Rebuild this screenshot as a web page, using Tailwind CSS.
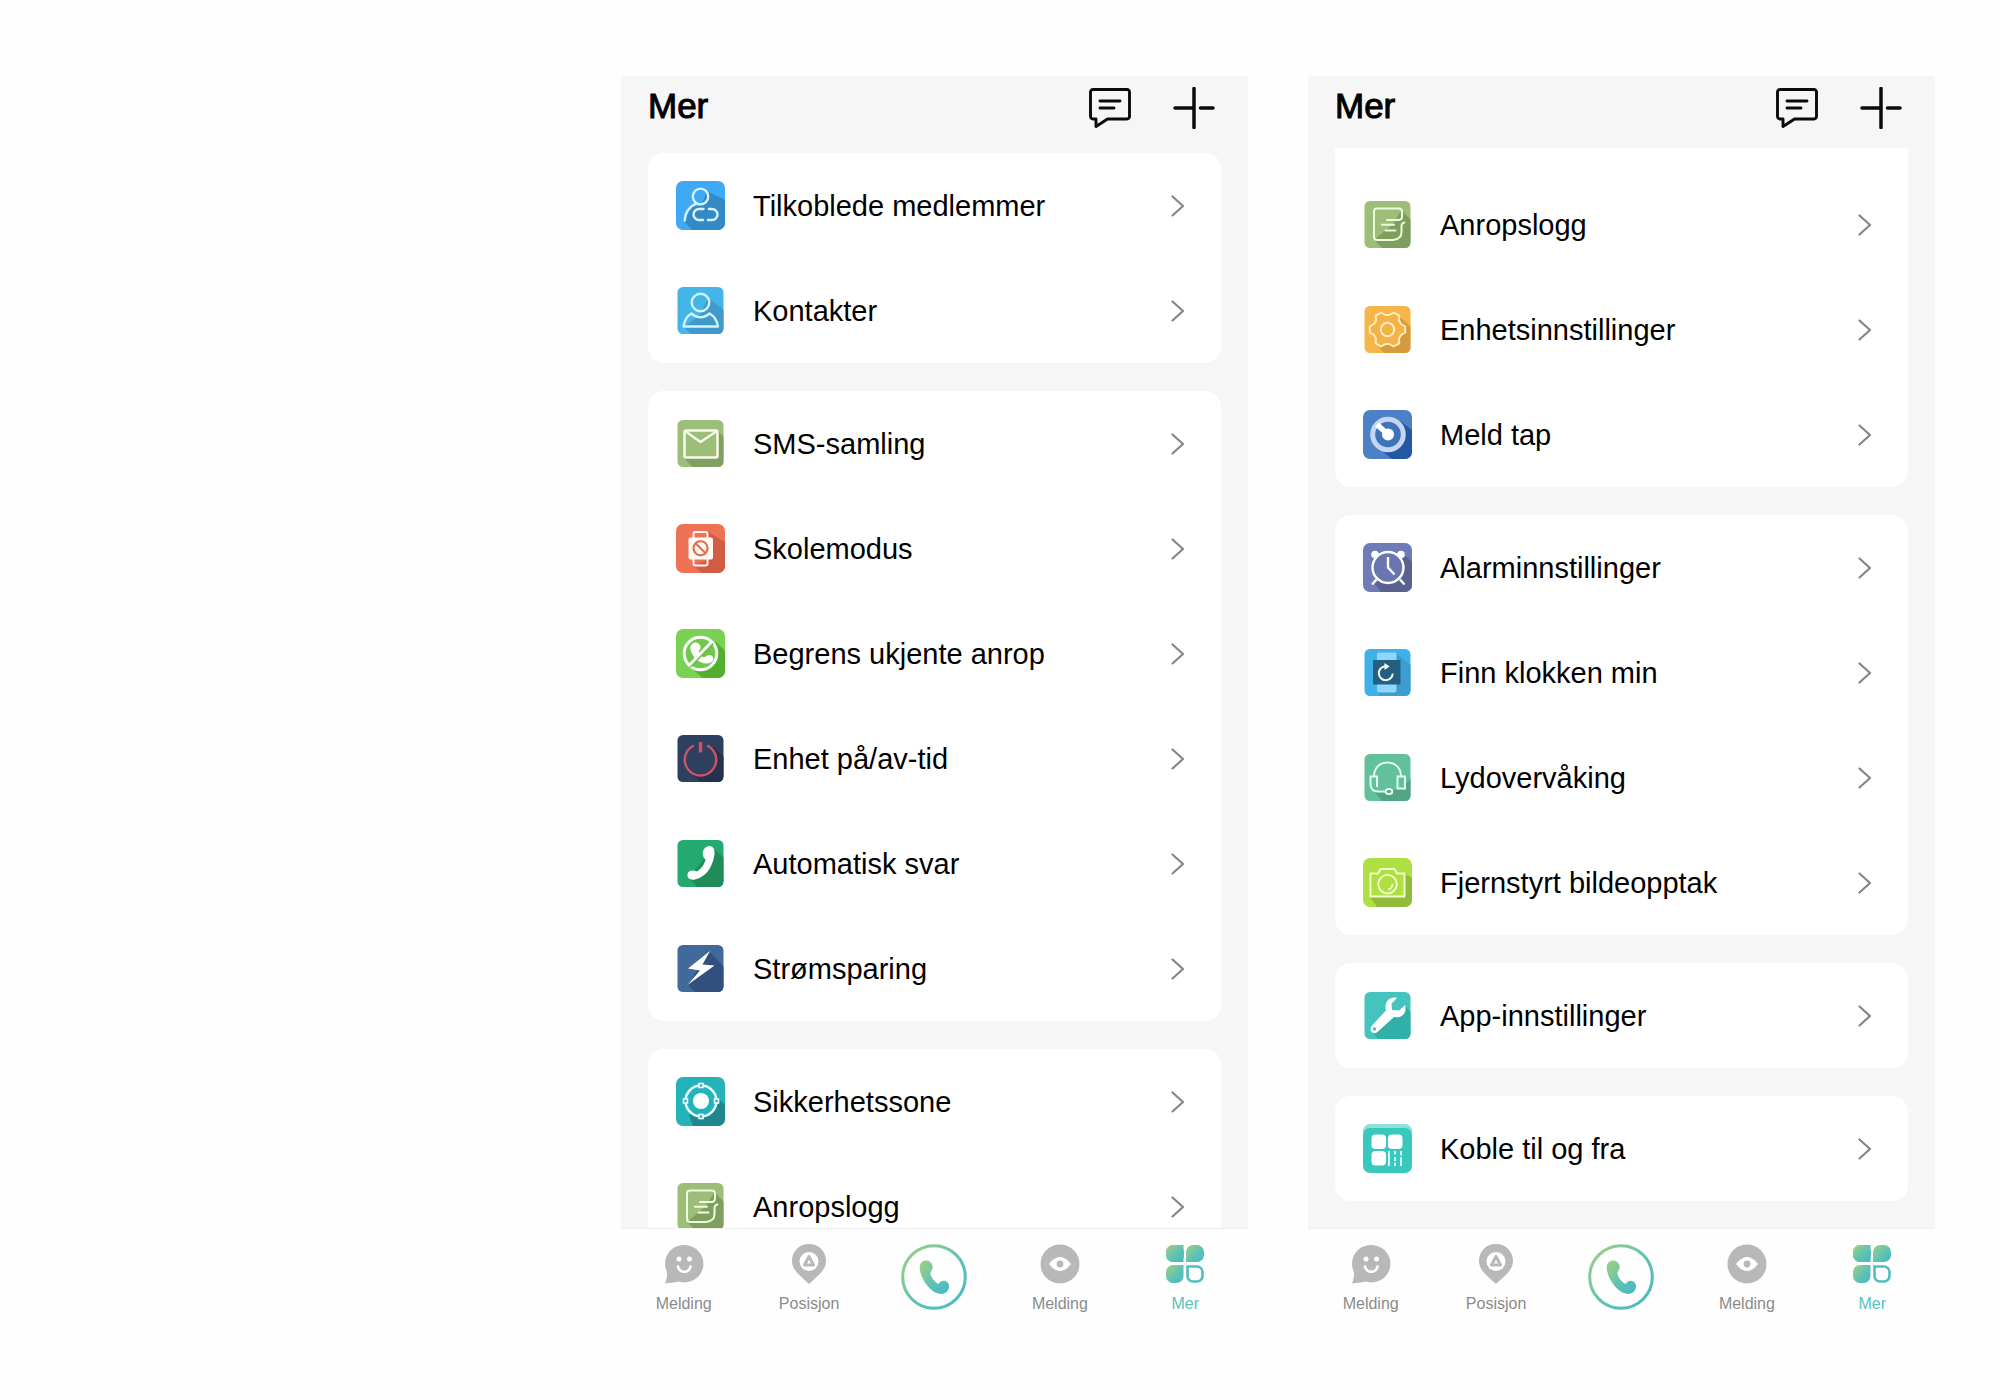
<!DOCTYPE html>
<html lang="no">
<head>
<meta charset="utf-8">
<meta name="viewport" content="width=device-width, initial-scale=1">
<title>Mer</title>
<script src="https://cdn.jsdelivr.net/npm/@tailwindcss/browser@4"></script>
</head>
<body class="bg-[#fefefe] font-['Liberation_Sans',Arial,sans-serif] text-black">

<!-- Shared icon symbols, drawn on a 49-unit tile -->
<svg width="0" height="0" class="absolute" aria-hidden="true">
  <defs>
    <linearGradient id="brand" x1="0" y1="0" x2="1" y2="1"><stop offset="0" stop-color="#a3d07f"/><stop offset=".55" stop-color="#5fc2b4"/><stop offset="1" stop-color="#45b9c6"/></linearGradient>
    <clipPath id="big"><rect width="49" height="49" rx="7"/></clipPath>
    <clipPath id="small"><rect x="1.5" y="1" width="46" height="47" rx="5.5"/></clipPath>
  </defs>
  <symbol id="members" viewBox="0 0 49 49"><g clip-path="url(#big)"><path fill="#3fa9f5" d="M0 0h49v49H0z"/><path fill="#338ac4" d="M31 10l18 9v30H16l-8-9 8-14 9-1z"/></g><g fill="none" stroke="#d5f3ff" stroke-width="2.4" stroke-linecap="round"><ellipse cx="24.5" cy="15.500" rx="7.700" ry="7.900"/><path d="M8.700 39.500C9 31.500 13 26 20 22.500M27.500 28h-4.500a5.500 5.500 0 0 0 0 11h4M33 28h3a5.500 5.500 0 0 1 0 11h-4"/></g></symbol>
  <symbol id="contacts" viewBox="0 0 49 49"><g clip-path="url(#small)"><path fill="#45b5e8" d="M0 0h49v49H0z"/><path fill="#4099c8" d="M32 12l17 13v24H16l-8-8 16-12z"/></g><g fill="none" stroke="#cff3ff" stroke-width="2.400" stroke-linejoin="round"><circle cx="24.500" cy="16.500" r="8.800"/><path d="M7.500 40.500C8.500 34 11 30 15.500 27.500C21 32.500 28 32.500 33.500 27.500C38 30 41 34 42 40.500Z"/></g></symbol>
  <symbol id="sms" viewBox="0 0 49 49"><g clip-path="url(#small)"><path fill="#9dbe78" d="M0 0h49v49H0z"/><path fill="#809f60" d="M41 11l8 8v30H17l-9-10h33z"/></g><g fill="none" stroke="#f6fbe9" stroke-width="2.500" stroke-linejoin="round"><rect x="8.500" y="11.500" width="33" height="27" rx="1.500"/><path d="M9 12l15.500 11L41 12"/></g></symbol>
  <symbol id="school" viewBox="0 0 49 49"><g clip-path="url(#big)"><path fill="#ee7254" d="M0 0h49v49H0z"/><path fill="#cf5e45" d="M32 8l17 10v31H26l-9-7 16-7z"/></g><g fill="none" stroke="#fff4ee" stroke-width="2"><rect x="17.500" y="8" width="14" height="8" rx="2"/><rect x="17.500" y="33" width="14" height="8.500" rx="2"/></g><rect x="12.500" y="13.500" width="24.500" height="22" rx="2" fill="#fff8f4"/><path d="M19.800 19.500l9.500 9.500M24.500 17.200a7 7 0 1 0 .1 0z" fill="none" stroke="#e06d50" stroke-width="2"/></symbol>
  <symbol id="block" viewBox="0 0 49 49"><g clip-path="url(#big)"><path fill="#7bd154" d="M0 0h49v49H0z"/><path fill="#53b02c" d="M40 13l9 9v27H27L14 38z"/></g><circle cx="24.500" cy="24.500" r="16.300" fill="#6fc849" stroke="#fff" stroke-width="3"/><path d="M15.500 15.500c3-3.500 8.500-2 9 2.500 .300 3-2.500 3.500-1.500 6 .700 2 2.500 4 5 4 2.500 0 3-2.500 5.500-2 4.500.500 5 5 2 7-4.500 3-11 1.500-15.500-3s-7.500-11.500-4.500-14.500z" fill="#fff"/><path d="M14 38L37 14.500" stroke="#67c141" stroke-width="2"/><path d="M13 36.500L36 12.500" stroke="#fff" stroke-width="2.800"/></symbol>
  <symbol id="power" viewBox="0 0 49 49"><g clip-path="url(#small)"><path fill="#2e405f" d="M0 0h49v49H0z"/><path fill="#26314d" d="M38 13l11 11v25H25l-12-12z"/></g><circle cx="24.500" cy="25" r="15" fill="#2e405f"/><path d="M17 12a15.700 15.700 0 1 0 15 0" fill="none" stroke="#cc5468" stroke-width="2.400" stroke-linecap="round"/><path d="M24.500 8v10.500" stroke="#cc5468" stroke-width="3.400"/></symbol>
  <symbol id="answer" viewBox="0 0 49 49"><g clip-path="url(#small)"><path fill="#24a971" d="M0 0h49v49H0z"/><path fill="#1f8c5a" d="M37 9l12 11v29H22l-9-10z"/></g><path d="M33 7c4 0 6 3 5.500 8C37 28 30 38 19 40.500c-5 1-8-1.500-7.500-5C12 31 17 31 21 32.500c5-3.500 7.500-7.500 8.500-12C25 17 26 8 33 7z" fill="#fff"/></symbol>
  <symbol id="saver" viewBox="0 0 49 49"><g clip-path="url(#small)"><path fill="#42699c" d="M0 0h49v49H0z"/><path fill="#31507f" d="M34 8l15 16v25H20l-8-8 10-16z"/></g><path d="M34 7L12 24.500l12 2L11.500 41 38.500 21.500l-12-1z" fill="#fff"/></symbol>
  <symbol id="zone" viewBox="0 0 49 49"><g clip-path="url(#big)"><path fill="#25b3ba" d="M0 0h49v49H0z"/><path fill="#20878e" d="M41 20l8 8v21H17l-4-11z"/></g><circle cx="25" cy="24" r="15.500" fill="#25b3ba" stroke="#e9ffff" stroke-width="2.500"/><circle cx="25" cy="24" r="8" fill="#fff"/><g fill="#25b3ba" stroke="#e9ffff" stroke-width="1.600"><rect x="23" y="6.500" width="4" height="4"/><rect x="23" y="37.500" width="4" height="4"/><rect x="7.500" y="22" width="4" height="4"/><rect x="38.500" y="22" width="4" height="4"/></g></symbol>
  <symbol id="log" viewBox="0 0 49 49"><g clip-path="url(#small)"><path fill="#9dbe78" d="M0 0h49v49H0z"/><path fill="#7f9f5f" d="M38.500 10L49 21v28H20l-9-9 19-16z"/></g><path d="M24 20h11q4 0 4-3.500v-5q0-3-3.500-3H14q-3 0-3 3v25.500q0 3 3 3h16q8.500-1 8.500-8v-6q0-3 3-3.500M19 24.800h12M22.500 30.500h10" fill="none" stroke="#eefbdc" stroke-width="2" stroke-linecap="round"/></symbol>
  <symbol id="gear" viewBox="0 0 49 49"><g clip-path="url(#small)"><path fill="#f6b548" d="M0 0h49v49H0z"/><path fill="#d69b3f" d="M36 11l13 12v26H22l-9-11z"/></g><path d="M42.200 21.500v6L38 30l-2 3.500.300 4.800-5.600 3.200-4.200-2.500h-4l-4.200 2.500-5.600-3.200.300-4.800L11 30l-4.200-2.500v-6L11 19l2-3.500-.300-4.800 5.600-3.200 4.200 2.500h4l4.200-2.500 5.600 3.200-.300 4.800 2 3.500z" fill="#f4b347" stroke="#ffeebd" stroke-width="2" stroke-linejoin="round"/><circle cx="24.500" cy="24.500" r="6.700" fill="none" stroke="#ffeebd" stroke-width="2"/></symbol>
  <symbol id="lost" viewBox="0 0 49 49"><g clip-path="url(#big)"><path fill="#4d81c6" d="M0 0h49v49H0z"/><path fill="#2457a3" d="M37 11l12 9v29H29L14 37z"/></g><circle cx="25" cy="24.500" r="15.300" fill="#3f74ba" stroke="#c4d6f4" stroke-width="5"/><circle cx="25" cy="24.500" r="6" fill="#fff"/><path d="M14 14.500L25 24.500" stroke="#fff" stroke-width="5.500"/></symbol>
  <symbol id="alarm" viewBox="0 0 49 49"><g clip-path="url(#big)"><path fill="#6e7bb6" d="M0 0h49v49H0z"/><path fill="#59628f" d="M41 12l8 7v30H18l-6-8z"/></g><circle cx="12" cy="11.500" r="3.800" fill="#fff"/><circle cx="38" cy="11.500" r="3.800" fill="#fff"/><circle cx="25" cy="24.500" r="15.500" fill="#6976b0" stroke="#fff" stroke-width="2.400"/><path d="M25 14v10.500l6.500 7M13.500 36.500l-4.500 5M37 36.500l4.500 5" fill="none" stroke="#fff" stroke-width="2.400"/></symbol>
  <symbol id="find" viewBox="0 0 49 49"><g clip-path="url(#small)"><path fill="#40b1e8" d="M0 0h49v49H0z"/><path fill="#3c9dd0" d="M34 6l15 12v31H18l-4-5z"/></g><path d="M16 4.500h16q1.500 0 1.500 2v6h-19.500v-6q0-2 2-2zM14 36h19.500v6.500q0 2-2 2H16q-2 0-2-2z" fill="#8fd6fb"/><path fill="#235f80" d="M10 12h27.500v24.500H10z"/><path d="M22 18.200a7 7 0 1 0 7.800 7.500" fill="none" stroke="#fff" stroke-width="2"/><path d="M21.500 15l5 3.500-5 3.500z" fill="#fff"/></symbol>
  <symbol id="audio" viewBox="0 0 49 49"><g clip-path="url(#small)"><path fill="#63c09c" d="M0 0h49v49H0z"/><path fill="#54a586" d="M38 36l11-12v25H20l-9-11z"/></g><g fill="none" stroke="#e2fff2" stroke-width="2"><path d="M11 23.500C11 14.500 17 9.500 24.500 9.500S38 14.500 38 23.500M14 34V23.500H7.500V32C8 36 11 38.500 15 38.500h7.500"/><rect x="34.500" y="23.500" width="7.500" height="12"/><ellipse cx="26" cy="38.500" rx="3.300" ry="2.500"/></g></symbol>
  <symbol id="camera" viewBox="0 0 49 49"><g clip-path="url(#big)"><path fill="#aee044" d="M0 0h49v49H0z"/><path fill="#91bb3d" d="M42 16l7 4v29H14L7 39h35z"/></g><g fill="none" stroke="#f1ffc9" stroke-width="1.900" stroke-linejoin="round"><path d="M7.500 15.500h7.500l2.500-4.500h14l2.500 4.500h7.500v23h-34z"/><circle cx="24.500" cy="26.200" r="9.300"/><path d="M29.500 26a6 6 0 0 1-4.500 5.500"/></g></symbol>
  <symbol id="wrench" viewBox="0 0 49 49"><g clip-path="url(#small)"><path fill="#43c5be" d="M0 0h49v49H0z"/><path fill="#2fb0a9" d="M41 14l8 8v27H16l-7-8 24-18z"/></g><path d="M34 7l-5.500 5.500.500 6.500 7 .500L42 14c2.500 7-3 14-11 12L14.500 41c-4.500 3.500-9-1.500-6-6L23 19.500C20.500 11 27 5 34 7z" fill="#fff"/><circle cx="11.500" cy="38" r="1.700" fill="#43c5be"/></symbol>
  <symbol id="link" viewBox="0 0 49 49"><g clip-path="url(#big)"><path fill="#8ee2da" d="M0 0h49v9H0z"/></g><rect y="4" width="49" height="45" rx="7" fill="#39c8bd"/><g fill="#fff"><rect x="8.500" y="10.500" width="14.500" height="14.500" rx="4"/><rect x="25" y="10.500" width="14.500" height="14.500" rx="4"/><rect x="8.500" y="27" width="14.500" height="14.500" rx="4"/></g><path d="M26 27v15M38 27v4.500M38 33v9M32 27v3.500M32 33v4M32 38.500v3.500" stroke="#e9fffc" stroke-width="1.700"/></symbol>

  <symbol id="chevron" viewBox="0 0 14 22"><path d="M1.500 1.500l10.500 9.500L1.500 20.500" fill="none" stroke="#858585" stroke-width="2.200" stroke-linecap="round" stroke-linejoin="round"/></symbol>
  <symbol id="comment" viewBox="0 0 42 40"><path d="M4 1.500h34a2.500 2.500 0 0 1 2.500 2.500v24.500a2.500 2.500 0 0 1-2.500 2.500H18.500L7 38.500V31H4a2.500 2.500 0 0 1-2.500-2.500V4A2.500 2.500 0 0 1 4 1.500zM11 13h20M11 20h14" fill="none" stroke="#0b0b0b" stroke-width="2.900" stroke-linecap="round" stroke-linejoin="round"/></symbol>
  <symbol id="plus" viewBox="0 0 42 42"><path d="M21 1.500v39M2 21h17M27.500 21H40" fill="none" stroke="#0b0b0b" stroke-width="3.500" stroke-linecap="round"/></symbol>

  <symbol id="smile" viewBox="0 0 40 40"><path d="M20.500 1A18.700 18.700 0 1 1 15 37.500C10 38.500 6 39 1 39.500 2.500 36 3.500 32 3 28A18.700 18.700 0 0 1 20.500 1z" fill="#b7b9b8"/><circle cx="15" cy="15" r="2.500" fill="#fff"/><circle cx="25.500" cy="15" r="2.500" fill="#fff"/><path d="M14 22.500c1 7 11.500 7 12.500 0" fill="none" stroke="#fff" stroke-width="2.600" stroke-linecap="round"/></symbol>
  <symbol id="pin" viewBox="0 0 40 40"><path d="M20 0c10 0 17 7.500 17 17 0 8-5 12-17 23C8 29 3 25 3 17 3 7.500 10 0 20 0z" fill="#b7b9b8"/><circle cx="20" cy="17.500" r="9.500" fill="#fff"/><path d="M20 12.500l4.500 8.500h-9z" fill="#fff" stroke="#b7b9b8" stroke-width="3" stroke-linejoin="round"/></symbol>
  <symbol id="eye" viewBox="0 0 40 40"><circle cx="20" cy="20" r="19.500" fill="#b7b9b8"/><path d="M9 20c4-5 7.500-7 11-7s7 2 11 7c-4 5-7.500 7-11 7s-7-2-11-7z" fill="#fff"/><circle cx="20" cy="20" r="3.400" fill="#b7b9b8"/></symbol>
  <symbol id="grid" viewBox="0 0 40 40"><g fill="url(#brand)"><path d="M8 1h10.500v17H8a7 7 0 0 1-7-7V8a7 7 0 0 1 7-7z"/><path d="M8 1h4a7 7 0 0 1 7 7v3a7 7 0 0 1-7 7H8a7 7 0 0 1-7-7V8a7 7 0 0 1 7-7z"/><path d="M28 1h4a7 7 0 0 1 7 7v3a7 7 0 0 1-7 7H21V8a7 7 0 0 1 7-7z"/><path d="M8 21h10.500v11a7 7 0 0 1-7 7H8a7 7 0 0 1-7-7v-4a7 7 0 0 1 7-7z"/></g><path d="M22.500 22.500H32a5.500 5.500 0 0 1 5.500 5.500v4a5.500 5.500 0 0 1-5.500 5.500h-4a5.500 5.500 0 0 1-5.500-5.500z" fill="none" stroke="#51bdc2" stroke-width="2.600"/></symbol>
  <symbol id="call" viewBox="0 0 66 66"><circle cx="33" cy="33" r="31.300" fill="none" stroke="url(#brand)" stroke-width="3"/><path d="M21.500 17.500c4-2.500 9 0 10 4 1 4.500-2.500 5.500-2 8.500 .500 3.500 4.500 8.500 8 10 2.500-3.500 6-4 8.500-2 3.500 3 2.500 8.500-2 11-5 2.500-12-.500-17-6.500-7-8.500-11.500-21-5.500-25z" fill="url(#brand)"/></symbol>
</svg>

<main class="grid grid-cols-[621fr_627fr_60fr_627fr_65fr] pt-[76px] pb-[76px]">
  <section class="col-start-2" data-screen="top"></section>
  <section class="col-start-4" data-screen="bottom"></section>
</main>

<script>
const screens = {
  top: {
    listClass: 'h-[1080px] overflow-hidden pt-[5px]',
    groups: [
      { cardClass: 'rounded-2xl', rows: [['members', 'Tilkoblede medlemmer'], ['contacts', 'Kontakter']] },
      { cardClass: 'rounded-2xl', rows: [['sms', 'SMS-samling'], ['school', 'Skolemodus'], ['block', 'Begrens ukjente anrop'], ['power', 'Enhet på/av-tid'], ['answer', 'Automatisk svar'], ['saver', 'Strømsparing']] },
      { cardClass: 'rounded-2xl', rows: [['zone', 'Sikkerhetssone'], ['log', 'Anropslogg']] },
    ],
  },
  bottom: {
    listClass: 'h-[1080px] overflow-hidden',
    groups: [
      { cardClass: 'rounded-b-2xl pt-6', rows: [['log', 'Anropslogg'], ['gear', 'Enhetsinnstillinger'], ['lost', 'Meld tap']] },
      { cardClass: 'rounded-2xl', rows: [['alarm', 'Alarminnstillinger'], ['find', 'Finn klokken min'], ['audio', 'Lydovervåking'], ['camera', 'Fjernstyrt bildeopptak']] },
      { cardClass: 'rounded-2xl', rows: [['wrench', 'App-innstillinger']] },
      { cardClass: 'rounded-2xl', rows: [['link', 'Koble til og fra']] },
    ],
  },
};

const row = ([icon, label]) => `
  <li><a href="#${icon}" class="flex h-[105px] items-center pl-7 pr-9">
    <svg class="size-[49px] shrink-0" aria-hidden="true"><use href="#${icon}"/></svg>
    <span class="ml-7 grow whitespace-nowrap text-[29px] leading-9">${label}</span>
    <svg class="h-[22px] w-[14px] shrink-0" aria-hidden="true"><use href="#chevron"/></svg>
  </a></li>`;

const tab = (icon, label, color) => `
  <a href="#" class="flex flex-col items-center gap-2 pt-[15px] ${color}">
    <svg class="size-10" aria-hidden="true"><use href="#${icon}"/></svg>
    <span class="text-base">${label}</span>
  </a>`;

const screen = ({ listClass, groups }) => `
  <div class="bg-[#f6f6f6] px-[27px]">
    <header class="flex h-[72px] items-start justify-between">
      <h1 class="pt-2 text-[35px] leading-[44px] [-webkit-text-stroke:1px_black]">Mer</h1>
      <div class="flex items-center gap-[42px] pt-[11px] pr-[6px]">
        <button type="button" aria-label="Meldinger"><svg class="h-10 w-[42px]"><use href="#comment"/></svg></button>
        <button type="button" aria-label="Legg til"><svg class="size-[42px]"><use href="#plus"/></svg></button>
      </div>
    </header>
    <div class="flex flex-col gap-7 ${listClass}">
      ${groups.map(g => `<ul class="shrink-0 bg-white ${g.cardClass}">${g.rows.map(row).join('')}</ul>`).join('')}
    </div>
  </div>
  <nav class="grid grid-cols-5 border-t border-[#f0f0f0] pb-2">
    ${tab('smile', 'Melding', 'text-[#8b8b8b]')}
    ${tab('pin', 'Posisjon', 'text-[#8b8b8b]')}
    <a href="#" aria-label="Ring" class="flex justify-center pt-[15px]"><svg class="size-[66px]" aria-hidden="true"><use href="#call"/></svg></a>
    ${tab('eye', 'Melding', 'text-[#8b8b8b]')}
    ${tab('grid', 'Mer', 'text-[#5cc0bc]')}
  </nav>`;

document.querySelectorAll('[data-screen]').forEach(el => {
  el.innerHTML = screen(screens[el.dataset.screen]);
});
</script>
</body>
</html>
